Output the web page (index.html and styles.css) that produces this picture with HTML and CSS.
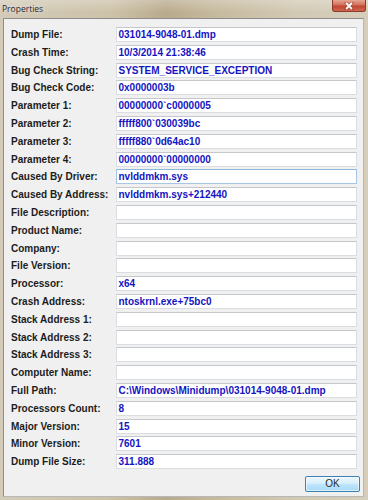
FILE: index.html
```html
<!DOCTYPE html>
<html>
<head>
<meta charset="utf-8">
<link rel="stylesheet" href="styles.css">
</head>
<body>
<div class="window">
  <div class="titlebar">
    <span class="title">Properties</span>
    <div class="close">
      <svg width="10" height="8" viewBox="0 0 10 8"><path d="M2 1 L8 7 M8 1 L2 7" stroke="#5a1a10" stroke-width="3" stroke-linecap="square" opacity="0.35"/><path d="M2 1 L8 7 M8 1 L2 7" stroke="#ffffff" stroke-width="1.8"/></svg>
    </div>
  </div>
  <div class="client">
    <div class="fields">
      <span class="lbl">Dump File:</span><div class="box">031014-9048-01.dmp</div>
      <span class="lbl">Crash Time:</span><div class="box">10/3/2014 21:38:46</div>
      <span class="lbl">Bug Check String:</span><div class="box">SYSTEM_SERVICE_EXCEPTION</div>
      <span class="lbl">Bug Check Code:</span><div class="box">0x0000003b</div>
      <span class="lbl">Parameter 1:</span><div class="box">00000000`c0000005</div>
      <span class="lbl">Parameter 2:</span><div class="box">fffff800`030039bc</div>
      <span class="lbl">Parameter 3:</span><div class="box">fffff880`0d64ac10</div>
      <span class="lbl">Parameter 4:</span><div class="box">00000000`00000000</div>
      <span class="lbl">Caused By Driver:</span><div class="box hover">nvlddmkm.sys</div>
      <span class="lbl">Caused By Address:</span><div class="box">nvlddmkm.sys+212440</div>
      <span class="lbl">File Description:</span><div class="box"></div>
      <span class="lbl">Product Name:</span><div class="box"></div>
      <span class="lbl">Company:</span><div class="box"></div>
      <span class="lbl">File Version:</span><div class="box"></div>
      <span class="lbl">Processor:</span><div class="box">x64</div>
      <span class="lbl">Crash Address:</span><div class="box">ntoskrnl.exe+75bc0</div>
      <span class="lbl">Stack Address 1:</span><div class="box"></div>
      <span class="lbl">Stack Address 2:</span><div class="box"></div>
      <span class="lbl">Stack Address 3:</span><div class="box"></div>
      <span class="lbl">Computer Name:</span><div class="box"></div>
      <span class="lbl">Full Path:</span><div class="box">C:\Windows\Minidump\031014-9048-01.dmp</div>
      <span class="lbl">Processors Count:</span><div class="box">8</div>
      <span class="lbl">Major Version:</span><div class="box">15</div>
      <span class="lbl">Minor Version:</span><div class="box">7601</div>
      <span class="lbl">Dump File Size:</span><div class="box">311.888</div>
    </div>
    <div class="actions">
      <button class="btn">OK</button>
    </div>
  </div>
</div>
</body>
</html>
```
FILE: styles.css
```css
html, body {
  margin: 0;
  padding: 0;
}
body {
  width: 368px;
  height: 500px;
  overflow: hidden;
}
.window {
  width: 368px;
  height: 500px;
  box-sizing: border-box;
  display: flex;
  flex-direction: column;
  background: linear-gradient(90deg, #d3cbb8 0%, #cdc2a9 30%, #b9aa8c 45%, #c7bb9f 60%, #d2c9b4 80%, #d6cebb 100%);
}
.titlebar {
  height: 18px;
  display: flex;
  justify-content: space-between;
  align-items: flex-start;
  background: linear-gradient(180deg, rgba(255,255,255,0.25), rgba(255,255,255,0) 70%);
}
.title {
  font-family: "Open Sans", "Liberation Sans", sans-serif;
  font-size: 8.5px;
  line-height: 8.5px;
  color: #2b2430;
  margin: 5px 0 0 2px;
  text-shadow: 0 0 4px rgba(255,255,255,0.8);
}
.close {
  width: 34px;
  height: 12px;
  margin-right: 2px;
  box-sizing: border-box;
  border: 1px solid #8a3a2e;
  border-top: none;
  border-radius: 0 0 3px 3px;
  background: linear-gradient(180deg, #e9a493 0%, #d2705c 45%, #c14530 55%, #d2664c 100%);
  display: flex;
  align-items: center;
  justify-content: center;
}
.client {
  flex: 1;
  margin: 0 4px 3px 3px;
  background: #f0f0f0;
  border: 1px solid #8d8d8d;
  border-right-color: #b8b8b8;
  border-bottom-color: #b8b8b8;
  display: flex;
  flex-direction: column;
  padding: 8px 0 0 7px;
}
.fields {
  display: grid;
  grid-template-columns: 104.5px 241px;
  grid-auto-rows: 15px;
  row-gap: 2.8px;
}
.lbl {
  font-family: "Liberation Sans", Arial, sans-serif;
  font-weight: bold;
  font-size: 10px;
  line-height: 15px;
  color: #1c1c1c;
  white-space: nowrap;
}
.box {
  box-sizing: border-box;
  height: 15px;
  background: #ffffff;
  border: 1px solid #dadde1;
  border-top-color: #c4c7cb;
  padding: 0 0 0 2px;
  font-family: "Liberation Sans", Arial, sans-serif;
  font-weight: bold;
  font-size: 10px;
  line-height: 13px;
  color: #1414c2;
  white-space: nowrap;
  overflow: hidden;
}
.box.hover {
  border-color: #a6c6e3;
  border-top-color: #8fb6dc;
}
.actions {
  display: flex;
  justify-content: flex-end;
  padding: 7px 3px 0 0;
}
.btn {
  width: 55px;
  height: 16px;
  box-sizing: border-box;
  margin: 0;
  padding: 0;
  border: 1px solid #3c7fb1;
  border-radius: 2px;
  background: linear-gradient(180deg, #eaf6fd 0%, #d9f0fc 45%, #bee6fd 50%, #a7d9f5 100%);
  box-shadow: inset 0 0 0 1px rgba(255,255,255,0.6);
  font-family: "Liberation Sans", Arial, sans-serif;
  font-size: 10px;
  line-height: 14px;
  color: #2a2a2a;
}
```
